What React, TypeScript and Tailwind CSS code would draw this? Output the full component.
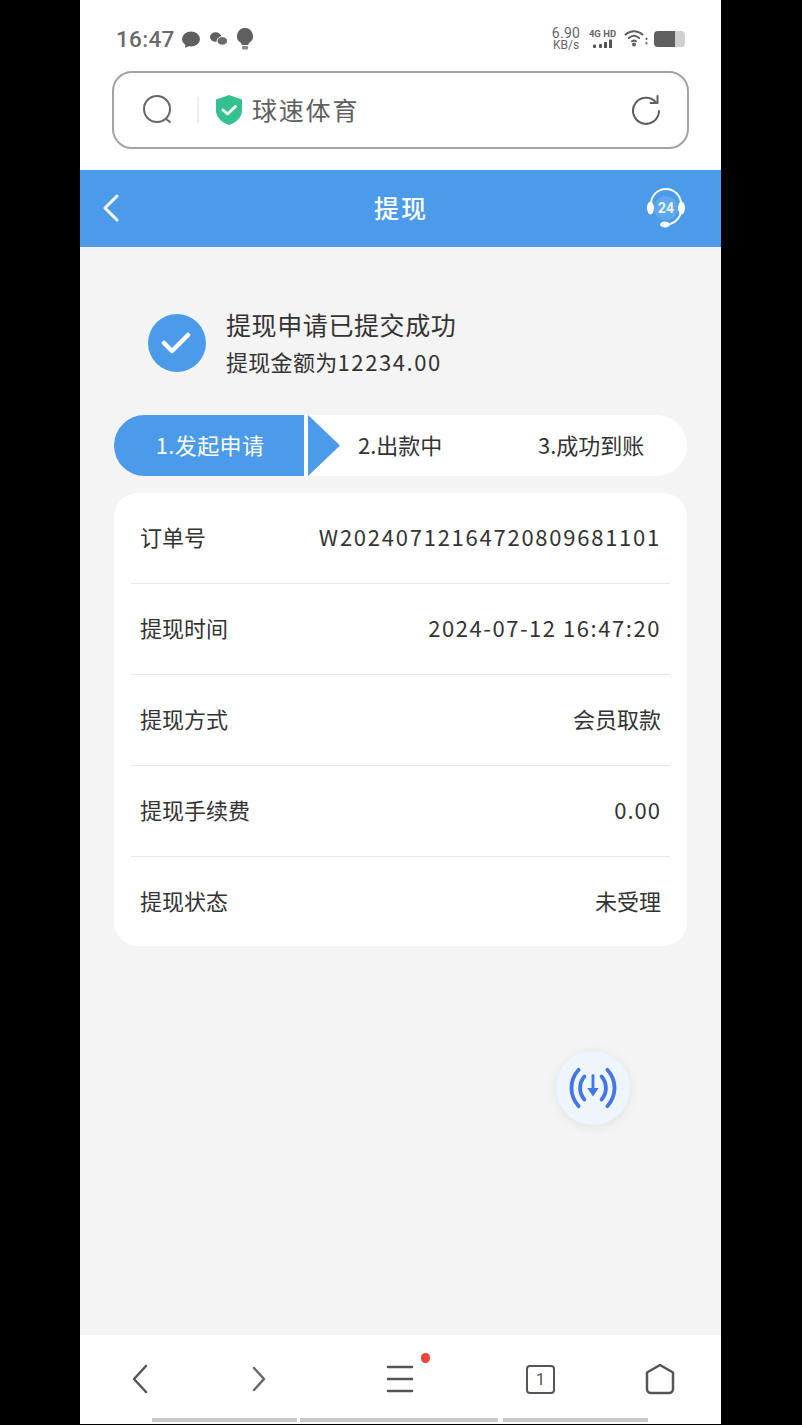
import React from "react";

const font = { fontFamily: '"Noto Sans CJK SC", "Noto Sans", sans-serif' };

const rows: [string, string, string][] = [
  ["订单号", "W20240712164720809681101", "tracking-[1.75px]"],
  ["提现时间", "2024-07-12 16:47:20", "tracking-[1.55px]"],
  ["提现方式", "会员取款", ""],
  ["提现手续费", "0.00", "tracking-[1px]"],
  ["提现状态", "未受理", ""],
];

function StatusBar() {
  return (
    <div className="flex h-[71px] items-start justify-between pl-[36px] pr-[36px] pt-[25px]">
      <div className="flex items-center gap-[6px] text-[#6a6a6a]">
        <span className="text-[22.5px] leading-[28px] font-medium tracking-[0.3px]" style={{ fontFamily: "Roboto, sans-serif" }}>16:47</span>
        <svg width="20" height="20" viewBox="0 0 20 20" className="mt-[1px]">
          <ellipse cx="10" cy="9" rx="9" ry="7.5" fill="#5f5f5f" />
          <path d="M5 13l-1 5 6-3z" fill="#5f5f5f" />
        </svg>
        <svg width="19" height="16" viewBox="0 0 20 16" className="ml-[2px]">
          <ellipse cx="7" cy="6" rx="6" ry="5" fill="#5f5f5f" />
          <ellipse cx="14" cy="10" rx="5.5" ry="4.5" fill="#6a6a6a" stroke="#fff" strokeWidth="1" />
        </svg>
        <svg width="18" height="24" viewBox="0 0 18 24" className="ml-[2px]">
          <path d="M9 1a8 8 0 0 0-4.500 14.600c.8.600 1.200 1.600 1.300 2.400h6.400c.1-.8.500-1.800 1.300-2.400A8 8 0 0 0 9 1z" fill="#5f5f5f" />
          <rect x="6" y="19" width="6" height="3.500" rx="1" fill="#8a8a8a" />
        </svg>
      </div>
      <div className="flex items-center text-[#666]">
        <div className="mt-[2px] flex w-[30px] flex-col items-center text-center" style={{ fontFamily: "Roboto, sans-serif" }}>
          <span className="text-[14px] leading-[13px] tracking-[0.3px]">6.90</span>
          <span className="text-[12px] leading-[11px]">KB/s</span>
        </div>
        <div className="ml-[6px] flex w-[31px] flex-col items-center">
          <span className="text-[9.500px] leading-[11px] font-bold whitespace-nowrap" style={{ fontFamily: "Roboto, sans-serif" }}>4G HD</span>
          <svg width="22" height="10" viewBox="0 0 22 10">
            <rect x="1" y="5.500" width="3" height="3.500" rx="1" fill="#555" />
            <rect x="7" y="5" width="3" height="4" rx="1" fill="#555" />
            <rect x="12" y="3" width="3" height="6" rx="0.500" fill="#555" />
            <rect x="17" y="0.500" width="3" height="8.500" rx="0.500" fill="#555" />
          </svg>
        </div>
        <svg width="24" height="20" viewBox="0 0 24 20" className="ml-[6px]" fill="none" stroke="#5f5f5f" strokeWidth="2" strokeLinecap="round">
          <path d="M1.500 6.500c5-4.500 12-4.500 17 0" />
          <path d="M4.800 10c3.200-2.800 7.200-2.800 10.400 0" />
          <path d="M8 13.200c1.400-1 2.600-1 4 0" />
          <circle cx="10" cy="16.500" r="1" fill="#5f5f5f" />
          <path d="M22.500 10.500v.5M22.500 15v.5" />
        </svg>
        <div className="ml-[6px] mt-[2px] flex h-[16px] w-[31px] overflow-hidden rounded-[4px] bg-[#cfcfcf]">
          <div className="h-full w-[21px] bg-[#5f5f5f]" />
        </div>
      </div>
    </div>
  );
}

function SearchBar() {
  return (
    <div className="mx-[32px] flex h-[78px] items-center rounded-[20px] border-2 border-[#a3a3a3] bg-white">
      <svg width="34" height="34" viewBox="0 0 34 34" fill="none" stroke="#666" strokeWidth="2" className="ml-[27px] shrink-0">
        <circle cx="16" cy="16" r="13" />
        <path d="M25 26l4 3" strokeLinecap="round" />
      </svg>
      <div className="ml-[22px] h-[26px] w-[2px] bg-[#eeeeee]" />
      <svg width="30" height="32" viewBox="0 0 30 32" className="ml-[15px] shrink-0">
        <path d="M15 1l13 4.500v11c0 7-6 12-13 14.500C8 28.500 2 23.500 2 16.500v-11z" fill="#33c28f" />
        <path d="M9 16l4.500 4 8-7.500" fill="none" stroke="#fff" strokeWidth="3" strokeLinecap="round" strokeLinejoin="round" />
      </svg>
      <span className="ml-[8px] mb-[2px] text-[25px] leading-[34px] tracking-[1.8px] text-[#5f5f5f]">球速体育</span>
      <svg width="32" height="32" viewBox="0 0 32 32" fill="none" stroke="#5f5f5f" strokeWidth="2" className="ml-auto mr-[25px] shrink-0">
        <path d="M26 8.500A13 13 0 1 0 29 17" strokeLinecap="round" />
        <path d="M27.500 2v7h-7" strokeLinecap="round" strokeLinejoin="round" />
      </svg>
    </div>
  );
}

function Header() {
  return (
    <div className="mt-[21px] flex h-[77px] items-center justify-between bg-[#4b9bea] pl-[22px] pr-[35px] text-white">
      <svg width="20" height="30" viewBox="0 0 20 30" fill="none" stroke="#fff" strokeWidth="3" strokeLinecap="round" strokeLinejoin="round" className="mb-[2px]">
        <path d="M15 3L3 15l12 12" />
      </svg>
      <span className="ml-[34px] mb-[3px] text-[25px] leading-[34px] font-medium tracking-[2px]">提现</span>
      <svg width="40" height="40" viewBox="0 0 40 40" fill="none" className="mb-[1px]">
        <path d="M5 16a15 15 0 0 1 30 0" stroke="#fff" strokeWidth="2" />
        <path d="M35 22c0 6-4 12-11 14" stroke="#fff" strokeWidth="2" />
        <ellipse cx="4.500" cy="20" rx="3.500" ry="6.500" fill="#fff" />
        <ellipse cx="35.500" cy="20" rx="3.500" ry="6.500" fill="#fff" />
        <ellipse cx="19" cy="36.500" rx="5" ry="3" fill="#fff" />
        <circle cx="20" cy="20" r="12" fill="#fff" fillOpacity="0.12" />
        <text x="20" y="25" textAnchor="middle" fontSize="14" fontWeight="700" fill="#fff" fillOpacity="0.9" fontFamily="Roboto, sans-serif">24</text>
      </svg>
    </div>
  );
}

function Steps() {
  return (
    <div className="mx-[34px] mt-[36px] flex h-[61px] rounded-[31px] bg-white">
      <div className="flex w-[190px] items-center justify-center rounded-l-[31px] bg-[#4b9bea] pb-[2px] pl-[2px] text-[22px] tracking-[0.4px] text-white">1.发起申请</div>
      <svg width="34" height="61" viewBox="0 0 34 61" className="ml-[4px] shrink-0">
        <path d="M0 0L32 30.500L0 61z" fill="#4b9bea" />
      </svg>
      <div className="ml-[16px] w-[85px] whitespace-nowrap pb-[2px] text-[22px] leading-[59px] text-[#333]">2.出款中</div>
      <div className="ml-[95px] w-[108px] whitespace-nowrap pb-[2px] text-[22px] leading-[59px] text-[#333]">3.成功到账</div>
    </div>
  );
}

function Fab() {
  return (
    <div className="mt-[105px] ml-[476px] flex h-[74px] w-[74px] items-center justify-center rounded-full bg-[#eff5fd] shadow-[0_2px_12px_rgba(0,0,0,0.08)]">
      <svg width="50" height="44" viewBox="0 0 52 46" fill="none" stroke="#4476e6" strokeWidth="4" strokeLinecap="round">
        <path d="M11 4C1 15 1 31 11 42" />
        <path d="M41 4c10 11 10 27 0 38" />
        <path d="M17 11c-6 7-6 17 0 24" />
        <path d="M35 11c6 7 6 17 0 24" />
        <path d="M26 10v14" strokeWidth="3" />
        <path d="M20 23h12l-6 9z" fill="#4476e6" stroke="none" />
      </svg>
    </div>
  );
}

function BottomBar() {
  return (
    <div className="relative flex h-[89px] flex-col bg-white">
      <div className="flex items-center pl-[50px] pt-[28px]">
        <svg width="20" height="32" viewBox="0 0 20 32" fill="none" stroke="#555" strokeWidth="2.500" strokeLinecap="round" strokeLinejoin="round" className="shrink-0">
          <path d="M16 3L4 16l12 13" />
        </svg>
        <svg width="20" height="28" viewBox="0 0 20 28" fill="none" stroke="#666" strokeWidth="2.500" strokeLinecap="round" strokeLinejoin="round" className="ml-[99px] shrink-0">
          <path d="M5 3l10 11L5 25" />
        </svg>
        <div className="relative ml-[117px] shrink-0">
          <svg width="28" height="30" viewBox="0 0 28 30" fill="none" stroke="#555" strokeWidth="2.500" strokeLinecap="round" className="block">
            <path d="M2 3h24M2 15h24M2 27h24" />
          </svg>
          <div className="absolute right-[-16px] top-[-11px] h-[10px] w-[9px] rounded-full bg-[#f0443a]" />
        </div>
        <div className="ml-[112px] flex h-[29px] w-[29px] shrink-0 items-center justify-center rounded-[4px] border-2 border-[#555] text-[17px] leading-none text-[#555]" style={{ fontFamily: "Roboto, sans-serif" }}>1</div>
        <svg width="30" height="32" viewBox="0 0 30 32" fill="none" stroke="#555" strokeWidth="2.500" strokeLinejoin="round" className="ml-[90px] shrink-0">
          <path d="M15 2l13 7.500V26a4 4 0 0 1-4 4H6a4 4 0 0 1-4-4V9.500z" />
        </svg>
      </div>
      <div className="absolute bottom-[2px] left-[72px] flex">
        <div className="h-[4px] w-[145px] bg-[#c8c8c8]" />
        <div className="ml-[3px] h-[4px] w-[198px] bg-[#c8c8c8]" />
        <div className="ml-[5px] h-[4px] w-[145px] bg-[#c8c8c8]" />
      </div>
    </div>
  );
}

export default function App() {
  return (
    <div className="flex h-[1425px] w-[802px] justify-center overflow-hidden bg-black pb-[1px]" style={font}>
      <div className="mr-[1px] flex h-full w-[641px] flex-col bg-white">
        <StatusBar />
        <SearchBar />
        <Header />
        <div className="flex flex-1 flex-col bg-[#f4f4f4]">
          <div className="mt-[59px] flex items-center pl-[68px]">
            <div className="flex h-[58px] w-[58px] items-center justify-center rounded-full bg-[#4b9bea]">
              <svg width="30" height="24" viewBox="0 0 30 24" fill="none" stroke="#fff" strokeWidth="4.500" strokeLinecap="round" strokeLinejoin="round" className="mr-[2px]">
                <path d="M3 12l8 8L27 4" />
              </svg>
            </div>
            <div className="ml-[20px] flex flex-col">
              <span className="text-[25px] leading-[36px] tracking-[0.6px] text-[#333]">提现申请已提交成功</span>
              <span className="mt-[1px] text-[22px] leading-[36px] tracking-[0.3px] text-[#333]">
                提现金额为<span className="tracking-[1.600px]">12234.00</span>
              </span>
            </div>
          </div>
          <Steps />
          <div className="mx-[34px] mt-[17px] flex h-[453px] flex-col rounded-[24px] bg-white px-[17px]">
            {rows.map(([label, value, track], i) => (
              <div key={label} className={`flex items-center justify-between px-[9px] pb-[3px] text-[22px] text-[#333] ${i < 4 ? "h-[91px] border-b border-[#e8e8e8]" : "h-[89px]"}`}>
                <span>{label}</span>
                <span className={track}>{value}</span>
              </div>
            ))}
          </div>
          <Fab />
        </div>
        <BottomBar />
      </div>
    </div>
  );
}
